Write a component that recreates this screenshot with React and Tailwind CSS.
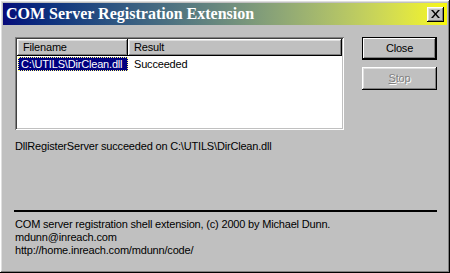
const raised =
  "shadow-[inset_-1px_-1px_#000000,inset_1px_1px_#ffffff,inset_-2px_-2px_#808080,inset_2px_2px_#dfdfdf]";

function Button({ children, isDefault, disabled }) {
  return (
    <div
      className={
        "w-[75px] h-[23px] flex items-center justify-center bg-[#c0c0c0] " +
        (isDefault
          ? "border border-black shadow-[inset_-1px_-1px_#000000,inset_1px_1px_#ffffff,inset_-2px_-2px_#808080]"
          : raised)
      }
    >
      <span
        className={
          disabled
            ? "text-[#808080] [text-shadow:1px_1px_0_#ffffff]"
            : "text-black"
        }
      >
        {children}
      </span>
    </div>
  );
}

export default function App() {
  return (
    <div
      className={
        "w-[450px] h-[273px] bg-[#c0c0c0] p-[3px] flex flex-col text-[11px] leading-[13px] tracking-[-0.18px] text-black " +
        raised
      }
      style={{ fontFamily: '"Liberation Sans", Arial, sans-serif' }}
    >
      <div className="h-[22px] flex items-center justify-between pl-[3px] pr-[3px] bg-gradient-to-r from-[#08087a] to-[#f8f800]">
        <span
          className="text-white font-bold text-[16px] leading-[18px] tracking-normal"
          style={{ fontFamily: '"Liberation Serif", "Times New Roman", serif' }}
        >
          COM Server Registration Extension
        </span>
        <div
          className={
            "w-[17px] h-[15px] bg-[#c0c0c0] flex items-center justify-center " + raised
          }
        >
          <svg width="9" height="8" viewBox="0 0 9 8">
            <path
              d="M0 0h2l2.5 3 2.5-3h2L5.5 4 9 8H7L4.5 5 2 8H0l3.5-4z"
              fill="#000"
            />
          </svg>
        </div>
      </div>

      <div className="flex pl-[12px] pt-[12px]">
        <div className="w-[329px] h-[93px] bg-white p-[2px] shadow-[inset_1px_1px_#808080,inset_-1px_-1px_#ffffff,inset_2px_2px_#404040,inset_-2px_-2px_#c0c0c0]">
          <div className="flex h-[17px]">
            <div className={"w-[111px] h-full bg-[#c0c0c0] pl-[6px] flex items-center " + raised}>
              Filename
            </div>
            <div className={"flex-1 h-full bg-[#c0c0c0] pl-[6px] flex items-center " + raised}>
              Result
            </div>
          </div>
          <div className="flex h-[14px] mt-[1px]">
            <div className="w-[111px] pl-[1px]">
              <span className="inline-block h-[14px] w-[110px] bg-[#000080] text-white border border-dotted border-[#ffff80] pl-[2px] leading-[12px]">
                C:\UTILS\DirClean.dll
              </span>
            </div>
            <div className="pl-[6px] leading-[14px]">Succeeded</div>
          </div>
        </div>
        <div className="ml-[18px] flex flex-col gap-[7px]">
          <Button isDefault>Close</Button>
          <Button disabled>
            <span className="underline">S</span>top
          </Button>
        </div>
      </div>

      <div className="pl-[12px] mt-[10px]">
        DllRegisterServer succeeded on C:\UTILS\DirClean.dll
      </div>

      <div className="ml-[11px] w-[423px] h-[2px] bg-black mt-[57px]" />

      <div className="pl-[12px] mt-[6px]">
        <div>COM server registration shell extension, (c) 2000 by Michael Dunn.</div>
        <div>mdunn@inreach.com</div>
        <div>http://home.inreach.com/mdunn/code/</div>
      </div>
    </div>
  );
}
